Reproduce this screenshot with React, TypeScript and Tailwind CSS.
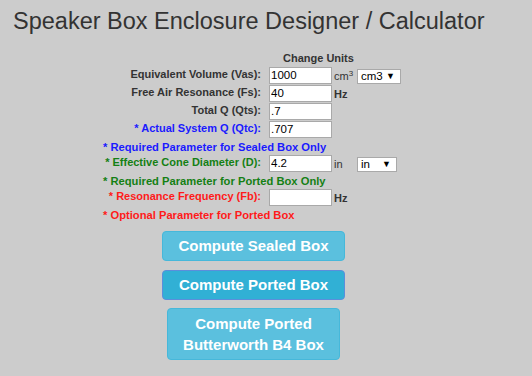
import React from "react";

type RowProps = {
  label: string;
  labelColor?: string;
  value: string;
  unit?: React.ReactNode;
  unitBold?: boolean;
  select?: { text: string; width: string };
};

function FieldRow({ label, labelColor = "text-[#333333]", value, unit, unitBold, select }: RowProps) {
  return (
    <div className="flex h-[18px] items-start">
      <div className={`w-[166px] shrink-0 pr-[6px] text-right font-bold leading-[15px] whitespace-nowrap ${labelColor}`}>
        {label}
      </div>
      <input
        readOnly
        value={value}
        className="ml-[2px] h-[17px] w-[63px] border border-[#a9a9a9] bg-white px-[1px] text-[11.5px] text-black outline-none"
      />
      <div className={`ml-[2px] w-[23px] pt-[2px] leading-[15px] ${unitBold ? "font-bold" : ""} text-[#333333]`}>
        {unit}
      </div>
      {select && (
        <div
          className={`mt-[2px] flex h-[15px] items-center justify-between border border-[#a9a9a9] bg-white pl-[3px] pr-[5px] text-[11.5px] leading-[13px] text-black ${select.width}`}
        >
          <span>{select.text}</span>
          <span className="text-[9px]">▼</span>
        </div>
      )}
    </div>
  );
}

function Note({ text, color }: { text: string; color: string }) {
  return (
    <div className={`h-[16px] pl-[2px] text-[11.2px] font-bold leading-[16px] whitespace-nowrap ${color}`}>{text}</div>
  );
}

function App() {
  return (
    <div className="h-[376px] w-[532px] overflow-hidden bg-[#cccccc] font-['Liberation_Sans',Arial,sans-serif] text-[11px] text-[#333333]">
      <div className="w-[507px]">
        <h1 className="pl-[13px] pt-[9px] text-[23.5px] leading-[1.1] font-normal text-[#333333]">
          Speaker Box Enclosure Designer / Calculator
        </h1>

        <div className="ml-[101px] mt-[17px]">
          <div className="mb-[2px] pl-[182px] font-bold leading-[13px]">Change Units</div>
          <FieldRow
            label="Equivalent Volume (Vas):"
            value="1000"
            unit={
              <span>
                cm<sup className="text-[8px]">3</sup>
              </span>
            }
            select={{ text: "cm3", width: "w-[44px]" }}
          />
          <FieldRow label="Free Air Resonance (Fs):" value="40" unit="Hz" unitBold />
          <FieldRow label="Total Q (Qts):" value=".7" />
          <FieldRow label="* Actual System Q (Qtc):" labelColor="text-[#1a1aff]" value=".707" />
          <Note text="* Required Parameter for Sealed Box Only" color="text-[#1a1aff]" />
          <FieldRow
            label="* Effective Cone Diameter (D):"
            labelColor="text-[#148014]"
            value="4.2"
            unit="in"
            select={{ text: "in", width: "w-[40px]" }}
          />
          <Note text="* Required Parameter for Ported Box Only" color="text-[#148014]" />
          <FieldRow label="* Resonance Frequency (Fb):" labelColor="text-[#ff1a1a]" value="" unit="Hz" unitBold />
          <Note text="* Optional Parameter for Ported Box" color="text-[#ff1a1a]" />
        </div>

        <div className="mt-[8px] flex flex-col items-center gap-[8px] text-[15px] font-bold text-white">
          <button className="h-[30px] w-[183px] rounded-[4px] border border-[#46b8da] bg-[#5bc0de]">
            Compute Sealed Box
          </button>
          <button className="mt-[1px] h-[30px] w-[183px] rounded-[4px] border border-[#5b8edc] bg-[#31b0d5]">
            Compute Ported Box
          </button>
          <button className="h-[52px] w-[173px] rounded-[4px] border border-[#46b8da] bg-[#5bc0de] px-[12px] leading-[21px]">
            Compute Ported Butterworth B4 Box
          </button>
        </div>
      </div>
    </div>
  );
}

export default App;
